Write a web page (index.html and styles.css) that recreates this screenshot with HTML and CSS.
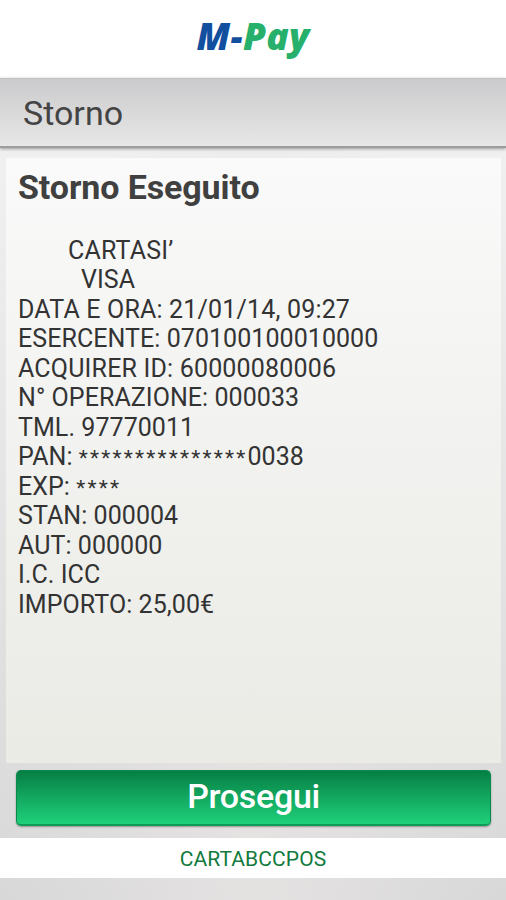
FILE: index.html
```
<!DOCTYPE html>
<html lang="it">
<head>
    <meta charset="UTF-8">
    <meta name="viewport" content="width=device-width, initial-scale=1.0">
    <title>M-Pay - Storno</title>
    <link rel="stylesheet" href="styles.css">
</head>
<body>

    <header class="logo-bar">
        <div class="logo"><span class="logo-m">M-</span><span class="logo-pay">Pay</span></div>
    </header>

    <div class="title-bar">
        <h1>Storno</h1>
    </div>

    <main class="receipt">
        <h2>Storno Eseguito</h2>
        <div class="receipt-text">
            <div class="circuit wide">CARTASI’</div>
            <div class="card">VISA</div>
            <div class="wide">DATA E ORA: 21/01/14, 09:27</div>
            <div>ESERCENTE: 070100100010000</div>
            <div class="wide">ACQUIRER ID: 60000080006</div>
            <div>N° OPERAZIONE: 000033</div>
            <div>TML. 97770011</div>
            <div>PAN: <span class="mask">***************</span>0038</div>
            <div>EXP: <span class="mask">****</span></div>
            <div>STAN: 000004</div>
            <div>AUT: 000000</div>
            <div>I.C. ICC</div>
            <div>IMPORTO: 25,00€</div>
        </div>
    </main>

    <button class="next-button" type="button">Prosegui</button>

    <footer class="footer">CARTABCCPOS</footer>

</body>
</html>
```

FILE: styles.css
```
* {
    box-sizing: border-box;
}
body {
    margin: 0;
    height: 900px;
    overflow: hidden;
    display: flex;
    flex-direction: column;
    font-family: Roboto, "Liberation Sans", sans-serif;
    background: radial-gradient(ellipse at 50% 92%, #e5e2e2 0%, rgba(226, 225, 225, 0) 70%), linear-gradient(#f0f0f0 150px, #d8d8d8 900px);
}
.logo-bar {
    height: 78px;
    padding-bottom: 6px;
    background-color: #fff;
    display: flex;
    justify-content: center;
    align-items: center;
}
.logo {
    font-family: "Open Sans", "Liberation Sans", sans-serif;
    font-size: 37px;
    font-weight: 800;
    font-style: italic;
    line-height: 48px;
    letter-spacing: 0.3px;
}
.logo-m {
    color: #124f9f;
}
.logo-pay {
    color: #27b06c;
}
.title-bar {
    height: 70px;
    padding-left: 23px;
    display: flex;
    align-items: center;
    background: linear-gradient(#cbcbcd, #e7e7e7);
    border-top: 1px solid #c2c2c2;
    border-bottom: 2px solid #9d9d9d;
    box-shadow: 0 1px 3px rgba(0, 0, 0, 0.35);
}
h1 {
    margin: 0;
    font-size: 34px;
    font-weight: 400;
    color: #444;
}
.receipt {
    height: 605px;
    margin: 10px 5px 0 6px;
    padding: 9px 12px;
    background: linear-gradient(#fafafa, #f2f2f0 45%, #eaebe5);
}
h2 {
    margin: 0;
    font-size: 34px;
    font-weight: 700;
    line-height: 40px;
    letter-spacing: -0.1px;
    color: #404040;
}
.receipt-text {
    margin-top: 28.5px;
    font-size: 25px;
    line-height: 29.5px;
    letter-spacing: 0.06px;
    color: #333;
}
.circuit {
    padding-left: 50px;
}
.card {
    padding-left: 63px;
}
.wide {
    letter-spacing: 0.18px;
}
.mask {
    font-size: 21px;
    line-height: 1;
    letter-spacing: 2.2px;
}
.next-button {
    height: 56px;
    margin: 7px 15px 0 16px;
    padding: 0 0 3px;
    font-family: inherit;
    font-size: 34px;
    font-weight: 500;
    letter-spacing: -0.3px;
    color: #fff;
    background: linear-gradient(#067f45, #1fd07a);
    border: 1px solid #0b8a4e;
    border-bottom: 2px solid #0f9a57;
    border-radius: 5px;
    box-shadow: 0 1px 2px rgba(0, 0, 0, 0.35);
}
.footer {
    height: 40px;
    margin-top: 12px;
    background-color: #fff;
    color: #117a3c;
    font-size: 21px;
    line-height: 42px;
    letter-spacing: 0.1px;
    text-align: center;
}
```
